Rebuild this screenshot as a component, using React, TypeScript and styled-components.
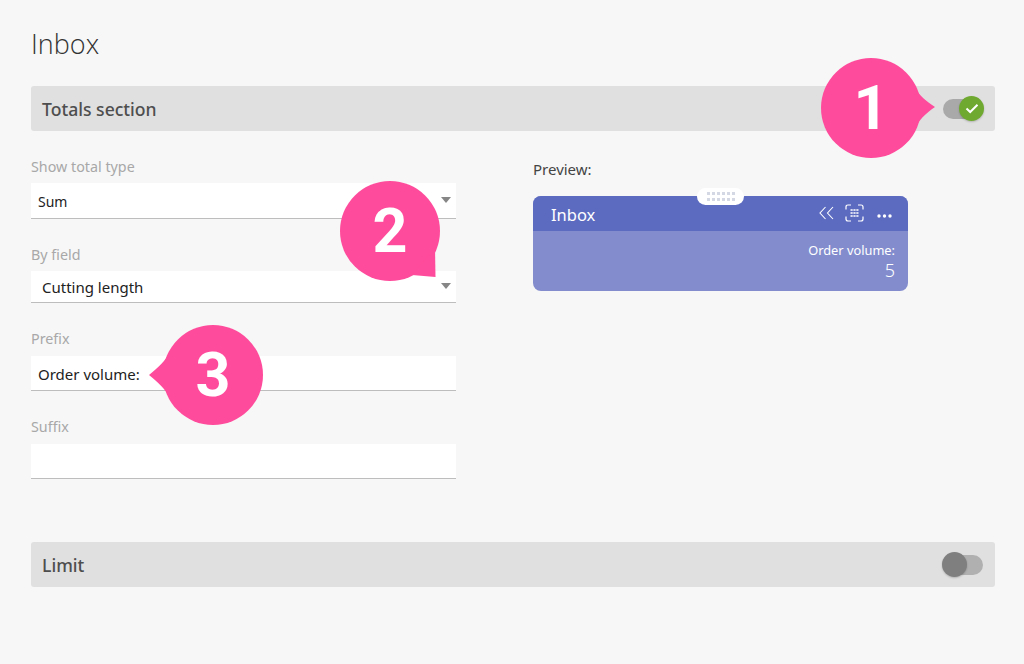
import React from 'react'
import styled, { createGlobalStyle } from 'styled-components'

const GlobalStyle = createGlobalStyle`
  html, body {
    margin: 0;
    padding: 0;
    background: #f7f7f7;
  }
  body {
    font-family: 'Noto Sans', 'Open Sans', sans-serif;
  }
`

const Page = styled.div`
  position: relative;
  box-sizing: border-box;
  width: 1024px;
  height: 664px;
  padding: 24px 29px 0 31px;
  overflow: hidden;
`

const Title = styled.h1`
  margin: 0 0 23px;
  height: 39px;
  font-size: 27px;
  line-height: 39px;
  font-weight: 300;
  color: #333;
  font-family: 'Open Sans', sans-serif;
`

const SectionBar = styled.div`
  display: flex;
  align-items: center;
  justify-content: space-between;
  box-sizing: border-box;
  height: 45px;
  padding: 0 12px 0 11px;
  background: #e0e0e0;
  border-radius: 3px;
  font-size: 17.6px;
  font-weight: 500;
  color: #4e4e4e;
`

const Switch = styled.div<{ $on?: boolean }>`
  position: relative;
  width: 40px;
  height: 20px;
  border-radius: 10px;
  background: ${(p) => (p.$on ? '#a9a9a9' : '#b0b0b0')};
`

const Knob = styled.div<{ $on?: boolean }>`
  position: absolute;
  top: -3px;
  left: ${(p) => (p.$on ? '16px' : '-1px')};
  display: flex;
  align-items: center;
  justify-content: center;
  width: 25px;
  height: 25px;
  border-radius: 50%;
  background: ${(p) => (p.$on ? '#6fa92f' : '#7f7f7f')};
  box-shadow: 0 1px 2px rgba(0, 0, 0, 0.2);
`

const Columns = styled.div`
  display: flex;
  height: 411px;
`

const FormColumn = styled.div`
  display: flex;
  flex-direction: column;
  gap: 26px;
  width: 425px;
  padding-top: 26px;
`

const Label = styled.label<{ $gap?: number }>`
  display: block;
  height: 20px;
  margin-bottom: ${(p) => p.$gap ?? 6}px;
  font-size: 14.3px;
  line-height: 20px;
  color: #a8a8a8;
`

const Input = styled.div<{ $height: number; $indent?: number; $size?: number }>`
  position: relative;
  display: flex;
  align-items: center;
  box-sizing: border-box;
  height: ${(p) => p.$height}px;
  padding: 1px 0 0 ${(p) => p.$indent ?? 7}px;
  background: #fff;
  border-bottom: 1px solid #bdbdbd;
  font-size: ${(p) => p.$size ?? 14}px;
  color: #222;
`

const Caret = styled.span`
  position: absolute;
  right: 5px;
  top: 50%;
  margin-top: -4px;
  border-left: 5px solid transparent;
  border-right: 5px solid transparent;
  border-top: 6px solid #868686;
`

const PreviewColumn = styled.div`
  margin-left: 77px;
  width: 375px;
  padding-top: 28px;
`

const PreviewLabel = styled.div`
  height: 20px;
  margin-bottom: 17px;
  font-size: 15px;
  line-height: 20px;
  color: #444;
`

const Card = styled.div`
  position: relative;
  height: 95px;
  border-radius: 8px;
  background: #838dce;
  color: #fff;
`

const CardHeader = styled.div`
  display: flex;
  align-items: center;
  justify-content: space-between;
  box-sizing: border-box;
  height: 35px;
  padding: 1px 16px 0 18px;
  background: #5c6bc0;
  border-radius: 8px 8px 0 0;
  font-size: 16.5px;
`

const CardIcons = styled.div`
  display: flex;
  align-items: center;
  gap: 11px;
  margin-top: -3px;
`

const DotsIcon = styled.svg`
  margin-top: 6px;
  margin-left: 2px;
`

const CardBody = styled.div`
  padding: 10px 13px 0 0;
  text-align: right;
`

const CardCaption = styled.div`
  font-size: 12.8px;
  line-height: 18px;
`

const CardValue = styled.div`
  font-size: 18px;
  line-height: 22px;
  font-weight: 300;
`

const Handle = styled.div`
  position: absolute;
  left: 164px;
  top: -8px;
  display: grid;
  grid-template-columns: repeat(6, 3px);
  gap: 3px 2px;
  align-content: center;
  justify-content: center;
  width: 47px;
  height: 17px;
  border-radius: 9px;
  background: #fff;

  > i {
    width: 3px;
    height: 3px;
    background: #d3d8e4;
  }
`

const Callout = styled.div<{ $left: number; $top: number }>`
  position: absolute;
  left: ${(p) => p.$left}px;
  top: ${(p) => p.$top}px;
  width: 100px;
  height: 100px;
  display: flex;
  align-items: center;
  justify-content: center;
  font-family: 'Roboto', sans-serif;
  font-size: 61px;
  font-weight: 700;
  line-height: 100px;
  color: #fff;

  > svg {
    position: absolute;
    left: 0;
    top: 0;
    overflow: visible;
  }

  > span {
    position: relative;
  }
`

const tails: Record<string, string> = {
  right: 'M94 30 C98 37 105 43 114 49 C105 55 98 62 94 70 Z',
  bottomRight: 'M95 66 L95.5 96 L72 94 Z',
  left: 'M6 28 C3 35 -5 43 -14 50 C-5 57 3 65 6 72 Z',
}

const Bubble = ({ n, left, top, tail }: { n: number; left: number; top: number; tail: string }) => (
  <Callout $left={left} $top={top}>
    <svg width="100" height="100" viewBox="0 0 100 100">
      <circle cx="50" cy="50" r="50" fill="#ff4b9b" />
      <path d={tails[tail]} fill="#ff4b9b" />
    </svg>
    <span>{n}</span>
  </Callout>
)

const App: React.FC = () => {
  return (
    <Page>
      <GlobalStyle />
      <Title>Inbox</Title>
      <SectionBar>
        Totals section
        <Switch $on>
          <Knob $on>
            <svg width="14" height="11" viewBox="0 0 14 11">
              <path d="M1.5 5.5 L5.2 9 L12.5 1.8" fill="none" stroke="#fff" strokeWidth="2" />
            </svg>
          </Knob>
        </Switch>
      </SectionBar>
      <Columns>
        <FormColumn>
          <div>
            <Label>Show total type</Label>
            <Input $height={36}>
              Sum
              <Caret />
            </Input>
          </div>
          <div>
            <Label>By field</Label>
            <Input $height={32} $indent={11} $size={15}>
              Cutting length
              <Caret />
            </Input>
          </div>
          <div>
            <Label $gap={7}>Prefix</Label>
            <Input $height={35} $size={15}>
              Order volume:
            </Input>
          </div>
          <div>
            <Label $gap={7}>Suffix</Label>
            <Input $height={35} />
          </div>
        </FormColumn>
        <PreviewColumn>
          <PreviewLabel>Preview:</PreviewLabel>
          <Card>
            <Handle>
              {Array.from({ length: 12 }).map((_, i) => (
                <i key={i} />
              ))}
            </Handle>
            <CardHeader>
              Inbox
              <CardIcons>
                <svg width="15" height="14" viewBox="0 0 15 14" fill="none" stroke="#fff" strokeWidth="1.1">
                  <path d="M6.5 1 L1 7 L6.5 13 M14 1 L8.5 7 L14 13" />
                </svg>
                <svg width="19" height="18" viewBox="0 0 19 18" fill="none" stroke="#fff" strokeWidth="1.2">
                  <path d="M1 5.5 V3 Q1 1 3 1 H6 M13 1 H16 Q18 1 18 3 V5.5 M18 12.5 V15 Q18 17 16 17 H13 M6 17 H3 Q1 17 1 15 V12.5" />
                  <path d="M5.5 6 H13.5 M5.5 9 H13.5 M5.5 12 H13.5" strokeWidth="1.5" strokeDasharray="2.2 0.7" />
                </svg>
                <DotsIcon width="15" height="4" viewBox="0 0 15 4" fill="#fff">
                  <circle cx="2" cy="2" r="1.7" />
                  <circle cx="7.5" cy="2" r="1.7" />
                  <circle cx="13" cy="2" r="1.7" />
                </DotsIcon>
              </CardIcons>
            </CardHeader>
            <CardBody>
              <CardCaption>Order volume:</CardCaption>
              <CardValue>5</CardValue>
            </CardBody>
          </Card>
        </PreviewColumn>
      </Columns>
      <SectionBar>
        Limit
        <Switch>
          <Knob />
        </Switch>
      </SectionBar>
      <Bubble n={1} left={821} top={58} tail="right" />
      <Bubble n={2} left={340} top={181} tail="bottomRight" />
      <Bubble n={3} left={163} top={325} tail="left" />
    </Page>
  )
}

export default App
